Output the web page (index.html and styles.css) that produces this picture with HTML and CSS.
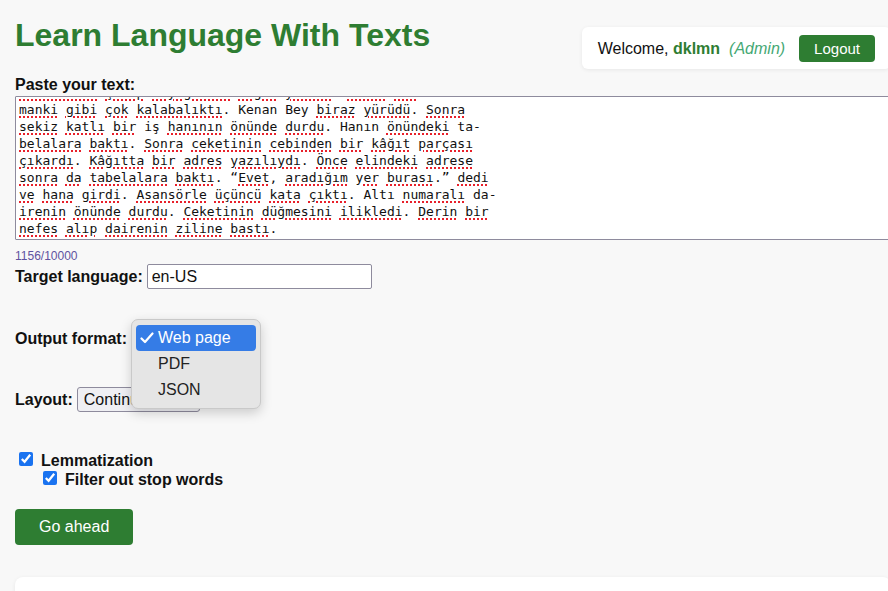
FILE: index.html
```html
<!DOCTYPE html>
<html lang="tr">
<head>
<meta charset="utf-8">
<title>Learn Language With Texts</title>
<link rel="stylesheet" href="styles.css">
</head>
<body>
<div class="page">
  <header class="header">
    <h1 class="title">Learn Language With Texts</h1>
    <div class="userbox">
      <span class="welcome">Welcome, <b class="user">dklmn</b></span>
      <i class="role">(Admin)</i>
      <button class="btn btn-logout" type="button">Logout</button>
    </div>
  </header>

  <form class="form">
    <label class="field-label">Paste your text:</label>
    <div class="textarea" role="textbox" aria-multiline="true">
<div class="ta-text"><span class="sp">bürosundan</span> <span class="sp">çıkıp</span> <span class="sp">Beyoğlu'na</span> <span class="sp">doğru</span> <span class="sp">yürüdü</span>. <span class="sp">Cadde</span> <span class="sp">her</span> za-
<span class="sp">manki</span> <span class="sp">gibi</span> <span class="sp">çok</span> <span class="sp">kalabalıktı</span>. Kenan Bey <span class="sp">biraz</span> <span class="sp">yürüdü</span>. <span class="sp">Sonra</span>
<span class="sp">sekiz</span> <span class="sp">katlı</span> <span class="sp">bir</span> iş <span class="sp">hanının</span> <span class="sp">önünde</span> <span class="sp">durdu</span>. Hanın <span class="sp">önündeki</span> ta-
<span class="sp">belalara</span> <span class="sp">baktı</span>. <span class="sp">Sonra</span> <span class="sp">ceketinin</span> <span class="sp">cebinden</span> <span class="sp">bir</span> <span class="sp">kâğıt</span> <span class="sp">parçası</span>
<span class="sp">çıkardı</span>. <span class="sp">Kâğıtta</span> <span class="sp">bir</span> <span class="sp">adres</span> <span class="sp">yazılıydı</span>. <span class="sp">Önce</span> <span class="sp">elindeki</span> <span class="sp">adrese</span>
<span class="sp">sonra</span> <span class="sp">da</span> <span class="sp">tabelalara</span> <span class="sp">baktı</span>. “<span class="sp">Evet</span>, <span class="sp">aradığım</span> <span class="sp">yer</span> <span class="sp">burası</span>.” <span class="sp">dedi</span>
<span class="sp">ve</span> <span class="sp">hana</span> <span class="sp">girdi</span>. <span class="sp">Asansörle</span> <span class="sp">üçüncü</span> <span class="sp">kata</span> <span class="sp">çıktı</span>. Altı <span class="sp">numaralı</span> da-
<span class="sp">irenin</span> <span class="sp">önünde</span> <span class="sp">durdu</span>. <span class="sp">Ceketinin</span> <span class="sp">düğmesini</span> <span class="sp">ilikledi</span>. <span class="sp">Derin</span> <span class="sp">bir</span>
<span class="sp">nefes</span> <span class="sp">alıp</span> <span class="sp">dairenin</span> <span class="sp">ziline</span> <span class="sp">bastı</span>.</div>
    </div>
    <div class="count">1156/10000</div>

    <div class="row row-target">
      <label class="row-label">Target language:</label>
      <input class="input" type="text" value="en-US">
    </div>

    <div class="row row-output">
      <label class="row-label">Output format:</label>
      <span class="select-wrap">
        <select class="select select-output">
          <option>Web page</option>
          <option>PDF</option>
          <option>JSON</option>
        </select>
        <div class="popup" role="listbox">
          <div class="popup-item is-selected" role="option">
            <svg class="check" width="14" height="12" viewBox="0 0 14 12" aria-hidden="true"><polyline points="1.5,6.5 5,10 12.5,1.5" fill="none" stroke="#fff" stroke-width="2.2" stroke-linecap="round" stroke-linejoin="round"/></svg>
            <span>Web page</span>
          </div>
          <div class="popup-item" role="option"><span class="check-space"></span><span>PDF</span></div>
          <div class="popup-item" role="option"><span class="check-space"></span><span>JSON</span></div>
        </div>
      </span>
    </div>

    <div class="row row-layout">
      <label class="row-label">Layout:</label>
      <select class="select select-layout">
        <option>Continuous</option>
        <option>Paragraphs</option>
      </select>
    </div>

    <div class="checks">
      <label class="check-row">
        <input class="checkbox" type="checkbox" checked>
        <span>Lemmatization</span>
      </label>
      <label class="check-row check-sub">
        <input class="checkbox" type="checkbox" checked>
        <span>Filter out stop words</span>
      </label>
    </div>

    <button class="btn btn-go" type="button">Go ahead</button>
  </form>

  <section class="card"></section>
</div>
</body>
</html>
```

FILE: styles.css
```css
html, body {
  margin: 0;
  padding: 0;
}

body {
  background: #f8f8f8;
  color: #111;
  font-family: "Liberation Sans", Arial, Helvetica, sans-serif;
  font-size: 16px;
  overflow: hidden;
}

.page {
  width: 876px;
  padding: 0 0 0 15px;
}

/* header */
.header {
  display: flex;
  justify-content: space-between;
  align-items: flex-start;
}

.title {
  margin: 17px 0 0;
  font-size: 32px;
  font-weight: bold;
  color: #2e7d32;
  line-height: normal;
}

.userbox {
  margin-top: 27px;
  display: flex;
  align-items: center;
  padding: 8px 16px 7px 16px;
  background: #fff;
  border-radius: 6px;
  box-shadow: 0 1px 4px rgba(0, 0, 0, 0.07);
}

.welcome {
  color: #111;
}

.user {
  color: #2e7d32;
  font-weight: bold;
}

.role {
  margin-left: 9px;
  color: #45a874;
  font-style: italic;
}

.btn {
  border: none;
  background: #2e7d32;
  color: #fff;
  border-radius: 4px;
  font-family: "Liberation Sans", Arial, Helvetica, sans-serif;
  cursor: pointer;
}

.btn-logout {
  margin-left: 14px;
  height: 27px;
  padding: 0 15px;
  font-size: 15px;
}

/* form */
.form {
  margin: 0;
}

.field-label {
  display: block;
  margin-top: 7px;
  font-weight: bold;
}

.textarea {
  box-sizing: border-box;
  margin-top: 2px;
  height: 144px;
  border: 1px solid #8e8b9d;
  border-radius: 1px;
  padding: 2px 3px;
  background: #fff;
  overflow: hidden;
}

.ta-text {
  margin-top: -15px;
  white-space: pre;
  font-family: "DejaVu Sans Mono", "Liberation Mono", monospace;
  font-size: 13px;
  line-height: 17px;
  color: #111;
}

.sp {
  text-decoration-line: underline;
  text-decoration-style: dotted;
  text-decoration-color: #e8202a;
  text-decoration-thickness: 2px;
  text-underline-offset: 2px;
}

.count {
  margin-top: 9px;
  font-size: 12px;
  color: #5f52a0;
}

.row {
  display: flex;
  align-items: baseline;
  gap: 4px;
}

.row-label {
  font-weight: bold;
}

.row-target {
  margin-top: 1px;
}

.row-output {
  margin-top: 37px;
}

.row-layout {
  margin-top: 36px;
}

.input {
  box-sizing: border-box;
  width: 225px;
  height: 25px;
  padding: 0 4px;
  border: 1px solid #8e8b9d;
  border-radius: 2px;
  background: #fff;
  font-family: "Liberation Sans", Arial, Helvetica, sans-serif;
  font-size: 16px;
  color: #111;
}

.select {
  appearance: none;
  -webkit-appearance: none;
  box-sizing: border-box;
  height: 25px;
  padding: 0 6px;
  border: 1px solid #8e8b9d;
  border-radius: 3px;
  background: #efeff3;
  font-family: "Liberation Sans", Arial, Helvetica, sans-serif;
  font-size: 16px;
  color: #111;
}

.select-output {
  width: 120px;
}

.select-layout {
  width: 123px;
}

.select-wrap {
  position: relative;
  display: inline-block;
}

/* open select menu */
.popup {
  position: absolute;
  left: 0;
  top: -7px;
  z-index: 10;
  box-sizing: border-box;
  width: 130px;
  padding: 5px 4px;
  background: #e5e5e5;
  border: 1px solid #c9c9c9;
  border-radius: 7px;
  box-shadow: 0 4px 12px rgba(0, 0, 0, 0.18);
}

.popup-item {
  display: flex;
  align-items: center;
  height: 26px;
  padding: 0 6px 0 4px;
  border-radius: 4px;
  color: #222;
  font-size: 16px;
}

.popup-item.is-selected {
  background: #357ce6;
  color: #fff;
}

.check {
  display: block;
  width: 14px;
  height: 12px;
  margin-right: 4px;
}

.check-space {
  display: block;
  width: 18px;
}

/* checkboxes */
.checks {
  margin-top: 39px;
}

.check-row {
  display: flex;
  align-items: center;
  height: 19px;
  line-height: 19px;
  font-weight: bold;
}

.check-sub {
  padding-left: 24px;
}

.checkbox {
  width: 14px;
  height: 14px;
  margin: 0 8px 3px 4px;
  accent-color: #1a73f0;
}

.btn-go {
  margin-top: 20px;
  height: 36px;
  padding: 0 24px;
  font-size: 16px;
}

.card {
  margin-top: 32px;
  height: 80px;
  background: #fff;
  border-radius: 8px;
  box-shadow: 0 1px 4px rgba(0, 0, 0, 0.07);
}
```
